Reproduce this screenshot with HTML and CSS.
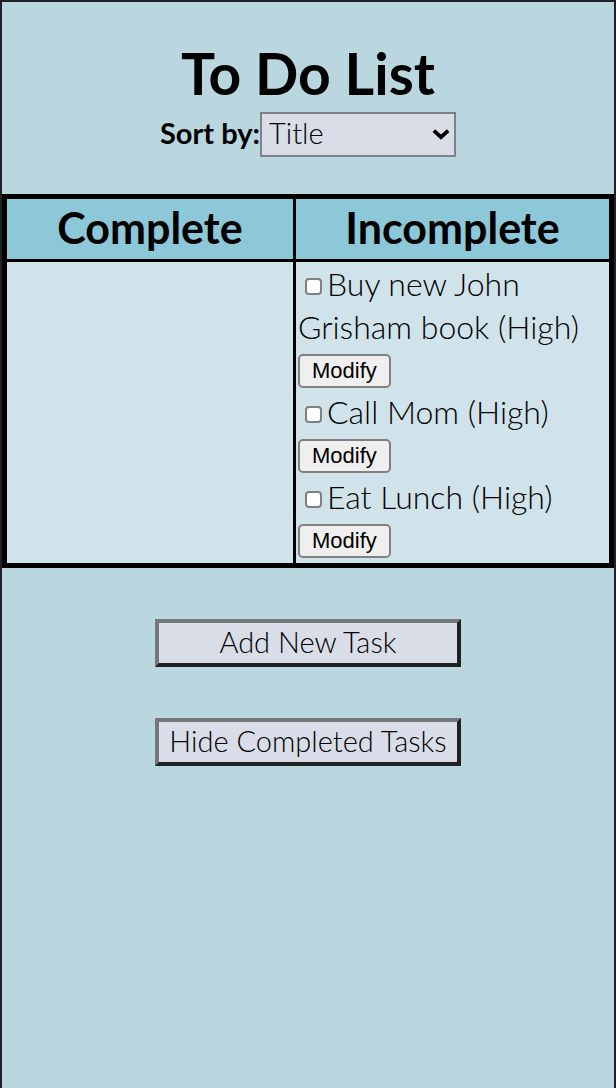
FILE: index.html
```html
<!DOCTYPE html>
<html lang="en">
<head>
<meta charset="utf-8">
<meta name="viewport" content="width=device-width, initial-scale=1">
<title>To Do List</title>
<link rel="stylesheet" href="styles.css">
</head>
<body>
<main class="app">
  <header class="header">
    <h1 class="title">To Do List</h1>
    <div class="sort">
      <label class="sort-label" for="sort">Sort by:</label>
      <div class="select-wrap">
        <select class="sort-select" id="sort">
          <option>Title</option>
          <option>Priority</option>
        </select>
        <svg class="chevron" viewBox="0 0 16 10" aria-hidden="true"><path d="M1.500 1.500 8 7.500l6.500-6"/></svg>
      </div>
    </div>
  </header>
  <table class="tasks">
    <thead>
      <tr><th class="col-complete">Complete</th><th>Incomplete</th></tr>
    </thead>
    <tbody>
      <tr>
        <td class="col-complete"></td>
        <td>
          <div class="task">
            <div class="task-text"><input class="check" type="checkbox" id="t1"><label for="t1">Buy new John Grisham book (High)</label></div>
            <div class="task-action"><button class="modify" type="button">Modify</button></div>
          </div>
          <div class="task">
            <div class="task-text"><input class="check" type="checkbox" id="t2"><label for="t2">Call Mom (High)</label></div>
            <div class="task-action"><button class="modify" type="button">Modify</button></div>
          </div>
          <div class="task">
            <div class="task-text"><input class="check" type="checkbox" id="t3"><label for="t3">Eat Lunch (High)</label></div>
            <div class="task-action"><button class="modify" type="button">Modify</button></div>
          </div>
        </td>
      </tr>
    </tbody>
  </table>
  <div class="actions">
    <button class="action" type="button">Add New Task</button>
    <button class="action" type="button">Hide Completed Tasks</button>
  </div>
</main>
</body>
</html>
```
FILE: styles.css
```css
* { box-sizing: border-box; }

body {
  margin: 0;
  background: #bad7e0;
  color: #000;
  font-family: Lato, "Open Sans", sans-serif;
  font-size: 29px;
  font-weight: 300;
}

.app {
  min-height: 100vh;
  border: 2px solid #222226;
  border-bottom: 0;
}

.header {
  display: flex;
  flex-direction: column;
  align-items: center;
  padding: 36px 0 37px;
}

.title {
  margin: 0;
  padding-bottom: 4px;
  font-size: 57px;
  line-height: 70px;
  font-weight: 700;
}

.sort { display: flex; align-items: center; }

.sort-label {
  padding-bottom: 4px;
  font-size: 29px;
  font-weight: 700;
}

.select-wrap { display: grid; align-items: center; }

.sort-select {
  grid-area: 1 / 1;
  appearance: none;
  width: 196px;
  height: 45px;
  padding: 0 7px 4px;
  border: 2px solid #808088;
  border-radius: 0;
  background: #d9dde8;
  color: #000;
  font: inherit;
}

.chevron {
  grid-area: 1 / 1;
  justify-self: end;
  width: 18px;
  height: 11px;
  margin-right: 6px;
  pointer-events: none;
  fill: none;
  stroke: #000;
  stroke-width: 3.500;
}

.tasks {
  width: 100%;
  border: 5px solid #000;
  border-spacing: 0;
}

.tasks th {
  height: 63px;
  padding: 0 0 2px;
  border-bottom: 3px solid #000;
  background: #8cc8d8;
  font-size: 43px;
  line-height: 58px;
  font-weight: 700;
}

.tasks .col-complete { width: 48%; border-right: 3px solid #000; }

.tasks td {
  padding: 0 2px 3px;
  background: #d0e3ea;
  vertical-align: top;
}

.task-text { font-size: 32px; line-height: 43px; }

.task-action {
  display: flex;
  align-items: flex-end;
  height: 42px;
  padding-bottom: 2px;
}

.check {
  appearance: none;
  width: 17px;
  height: 17px;
  margin: 0 5px 0 7px;
  border: 2px solid #808080;
  border-radius: 4px;
  background: #fff;
  vertical-align: 1px;
}

.check:checked { background: #0075ff; }

.modify {
  height: 34px;
  padding: 0 12px;
  border: 2px solid #808080;
  border-radius: 5px;
  background: #efefef;
  color: #000;
  font: 22px "Liberation Sans", Arial, sans-serif;
}

.actions {
  display: flex;
  flex-direction: column;
  align-items: center;
  gap: 51px;
  padding: 51px 0;
}

.action {
  width: 50%;
  min-width: 306px;
  height: 48px;
  padding: 0 0 4px;
  border: 4px solid;
  border-color: #747878 #202020 #202020 #747878;
  background: #d9dde8;
  color: #000;
  font: inherit;
}
```
